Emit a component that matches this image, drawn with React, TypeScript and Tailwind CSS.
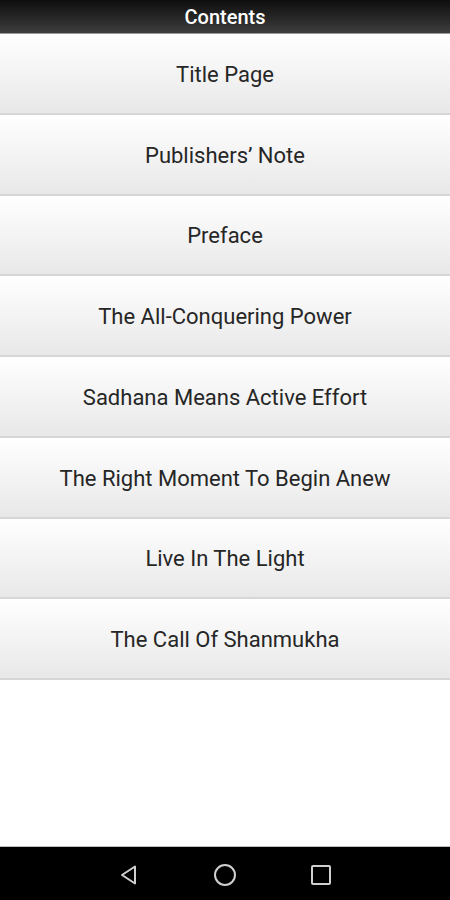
import React from "react";

const items = [
  "Title Page",
  "Publishers’ Note",
  "Preface",
  "The All-Conquering Power",
  "Sadhana Means Active Effort",
  "The Right Moment To Begin Anew",
  "Live In The Light",
  "The Call Of Shanmukha",
];

export default function App() {
  return (
    <div
      className="w-[450px] h-[900px] flex flex-col bg-white overflow-hidden"
      style={{ fontFamily: "Roboto, 'Noto Sans', sans-serif" }}
    >
      <div className="h-[34px] shrink-0 flex items-center justify-center bg-gradient-to-b from-[#0e0e0e] to-[#3e3e3e] border-b border-[#9a9a9a]">
        <span className="text-white text-[20px] font-medium leading-none">Contents</span>
      </div>
      <div className="flex flex-col">
        {items.map((t) => (
          <div
            key={t}
            className="h-[80.75px] shrink-0 flex items-center justify-center pt-[3px] bg-gradient-to-b from-[#ffffff] to-[#e8e8e8] border-b-2 border-[#d6d6d6]"
          >
            <span className="text-[#262626] text-[22px] leading-none">{t}</span>
          </div>
        ))}
      </div>
      <div className="flex-1" />
      <div className="h-[54px] shrink-0 bg-black border-t border-[#bdbdbd] flex items-center justify-center pt-[2px]">
        <div className="flex items-center gap-[72px]">
          <svg width="24" height="24" viewBox="0 0 24 24">
            <path d="M18 3.5 L18 20.5 L5 12 Z" fill="none" stroke="#cfcfcf" strokeWidth="2" strokeLinejoin="round" />
          </svg>
          <svg width="24" height="24" viewBox="0 0 24 24">
            <circle cx="12" cy="12" r="10" fill="none" stroke="#cfcfcf" strokeWidth="2" />
          </svg>
          <svg width="24" height="24" viewBox="0 0 24 24">
            <rect x="3" y="3" width="18" height="18" rx="1" fill="none" stroke="#cfcfcf" strokeWidth="2" />
          </svg>
        </div>
      </div>
    </div>
  );
}
